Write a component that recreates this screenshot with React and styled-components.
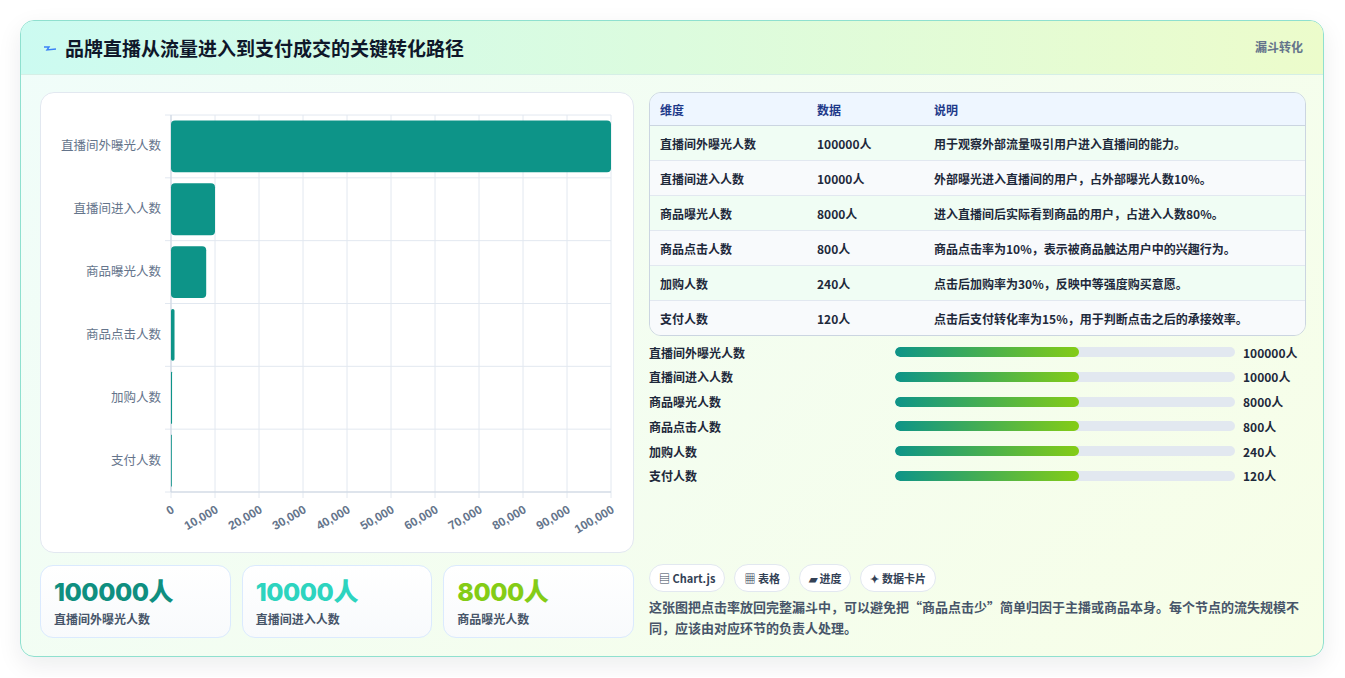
import React from "react";
import styled, { createGlobalStyle } from "styled-components";

const Global = createGlobalStyle`
  body{margin:0;background:#fff;font-family:"Noto Sans CJK SC","Noto Sans",sans-serif;}
`;
const data = [
  ["直播间外曝光人数", 100000, "用于观察外部流量吸引用户进入直播间的能力。"],
  ["直播间进入人数", 10000, "外部曝光进入直播间的用户，占外部曝光人数10%。"],
  ["商品曝光人数", 8000, "进入直播间后实际看到商品的用户，占进入人数80%。"],
  ["商品点击人数", 800, "商品点击率为10%，表示被商品触达用户中的兴趣行为。"],
  ["加购人数", 240, "点击后加购率为30%，反映中等强度购买意愿。"],
  ["支付人数", 120, "点击后支付转化率为15%，用于判断点击之后的承接效率。"],
];
const Page = styled.div`padding:20px;`;
const Card = styled.div`
  width:1304px;height:637px;box-sizing:border-box;border:1px solid #8fe0cf;border-radius:14px;
  background:linear-gradient(135deg,#f0fdfa,#f7fee7);overflow:hidden;
  box-shadow:0 8px 24px rgba(15,23,42,.08);display:flex;flex-direction:column;
`;
const Header = styled.div`
  height:55px;box-sizing:border-box;display:flex;align-items:center;justify-content:space-between;
  padding:0 20px 0 22px;background:linear-gradient(90deg,#ccfbf1,#ecfccb);border-bottom:1px solid #d5efe6;
`;
const Title = styled.h1`margin:0;font-size:19px;font-weight:700;color:#0f172a;display:flex;align-items:center;gap:8px;`;
const Tag = styled.span`font-size:12px;font-weight:700;color:#64748b;align-self:flex-start;margin-top:17px;`;
const Body = styled.div`flex:1;display:grid;grid-template-columns:594px 657px;gap:15px;padding:17px 19px 18px 19px;`;
const Col = styled.div`display:flex;flex-direction:column;gap:12px;`;
const ChartBox = styled.div`height:461px;box-sizing:border-box;background:#fff;border:1px solid #e2e8f0;border-radius:14px;`;
const Kpis = styled.div`display:grid;grid-template-columns:repeat(3,1fr);gap:11px;`;
const Kpi = styled.div`height:73px;box-sizing:border-box;border:1px solid #dbeafe;border-radius:13px;background:linear-gradient(180deg,#fff,#f8fafc);padding:10px 13px;`;
const KpiV = styled.div`font-family:Inter,"Noto Sans CJK SC",sans-serif;font-size:25px;font-weight:800;color:${p=>p.c};line-height:32px;letter-spacing:-.5px;`;
const KpiL = styled.div`font-size:12px;font-weight:600;color:#475569;margin-top:2px;`;
const Table = styled.table`width:100%;border-collapse:separate;border-spacing:0;border:1px solid #cbd5e1;border-radius:12px;overflow:hidden;font-size:12px;font-weight:600;color:#1e293b;`;
const Th = styled.th`text-align:left;height:32px;padding:0 10px;background:#eef6ff;color:#1e3a8a;font-weight:700;border-bottom:1px solid #cbd5e1;`;
const Td = styled.td`height:34px;padding:0 10px;border-top:${p=>p.first?"none":"1px solid #e2e8f0"};background:${p=>p.odd?"#f8fafc":"#f0fdf4"};`;
const Progress = styled.div`display:flex;flex-direction:column;gap:6.8px;margin-top:7px;`;
const PRow = styled.div`display:grid;grid-template-columns:246px 340px auto;align-items:center;font-size:12px;font-weight:700;color:#1e293b;height:18px;`;
const Track = styled.div`height:10px;border-radius:5px;background:#e2e8f0;overflow:hidden;`;
const Fill = styled.div`height:100%;width:54%;border-radius:5px;background:linear-gradient(90deg,#0d9488,#84cc16);`;
const PVal = styled.span`padding-left:8px;`;
const Chips = styled.div`display:flex;gap:9px;margin-top:auto;`;
const Chip = styled.span`height:28px;box-sizing:border-box;padding:0 9px;border:1px solid #e2e8f0;border-radius:14px;background:#fff;font-size:11px;font-weight:700;color:#334155;display:flex;align-items:center;gap:3px;`;
const Note = styled.p`margin:4px 0 0;font-size:13px;line-height:21px;color:#475569;font-weight:600;`;

function Chart(){
  const x0=130,x1=570,y0=22,h=377,bh=h/6;
  const ticks=[...Array(11)].map((_,i)=>i);
  return (
    <svg width="592" height="459" style={{display:"block"}}>
      {ticks.map(i=>{const x=x0+i*(x1-x0)/10;return <line key={i} x1={x} x2={x} y1={y0} y2={y0+h+6} stroke="#e2e8f0"/>})}
      {[...Array(7)].map((_,i)=><line key={i} x1={x0-6} x2={x1} y1={y0+i*bh} y2={y0+i*bh} stroke="#e2e8f0"/>)}
      <line x1={x0} x2={x0} y1={y0} y2={y0+h} stroke="#cbd5e1"/>
      <line x1={x0} x2={x1} y1={y0+h} y2={y0+h} stroke="#cbd5e1"/>
      {data.map((d,i)=>{const w=d[1]/100000*(x1-x0);const y=y0+i*bh+5.5;return(
        <g key={i}>
          <rect x={x0} y={y} width={Math.max(w,0.8)} height={bh-11} rx={Math.min(4,w/2)} fill="#0d9488"/>
          <text x={x0-10} y={y0+i*bh+bh/2+4} textAnchor="end" fontSize="12.5" fill="#64748b" fontFamily="Noto Sans CJK SC">{d[0]}</text>
        </g>)})}
      {ticks.map(i=>{const x=x0+i*(x1-x0)/10;return <text key={i} transform={`translate(${x+4},${y0+h+20}) rotate(-30)`} textAnchor="end" fontSize="12" fontWeight="700" fill="#64748b" fontFamily="Liberation Sans">{i===0?"0":(i*10000).toLocaleString("en-US")}</text>})}
    </svg>
  );
}

export default function App(){
  return (<Page><Global/>
    <Card>
      <Header>
        <Title><svg width="14" height="10" viewBox="0 0 14 10"><path d="M1 4 L6 4 L4 7 L13 6" stroke="#3b82f6" strokeWidth="1.4" fill="none"/></svg>品牌直播从流量进入到支付成交的关键转化路径</Title>
        <Tag>漏斗转化</Tag>
      </Header>
      <Body>
        <Col>
          <ChartBox><Chart/></ChartBox>
          <Kpis>
            <Kpi><KpiV c="#0f8f80">100000人</KpiV><KpiL>直播间外曝光人数</KpiL></Kpi>
            <Kpi><KpiV c="#2dd4bf">10000人</KpiV><KpiL>直播间进入人数</KpiL></Kpi>
            <Kpi><KpiV c="#84cc16">8000人</KpiV><KpiL>商品曝光人数</KpiL></Kpi>
          </Kpis>
        </Col>
        <Col style={{gap:0}}>
          <Table>
            <thead><tr><Th style={{width:137}}>维度</Th><Th style={{width:97}}>数据</Th><Th>说明</Th></tr></thead>
            <tbody>{data.map((d,i)=><tr key={i}><Td first={i===0} odd={i%2}>{d[0]}</Td><Td first={i===0} odd={i%2}>{d[1]}人</Td><Td first={i===0} odd={i%2}>{d[2]}</Td></tr>)}</tbody>
          </Table>
          <Progress>{data.map((d,i)=><PRow key={i}><span>{d[0]}</span><Track><Fill/></Track><PVal>{d[1]}人</PVal></PRow>)}</Progress>
          <Chips><Chip>▤ Chart.js</Chip><Chip>▦ 表格</Chip><Chip>▰ 进度</Chip><Chip>✦ 数据卡片</Chip></Chips>
          <Note>这张图把点击率放回完整漏斗中，可以避免把“商品点击少”简单归因于主播或商品本身。每个节点的流失规模不同，应该由对应环节的负责人处理。</Note>
        </Col>
      </Body>
    </Card>
  </Page>);
}
